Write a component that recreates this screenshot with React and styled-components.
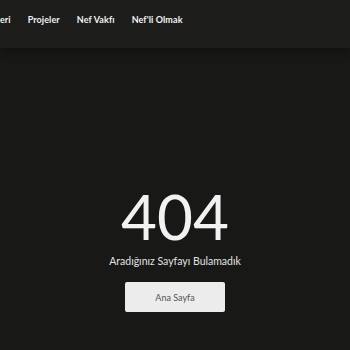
import React from "react";
import styled, { createGlobalStyle } from "styled-components";

const Global = createGlobalStyle`
  html, body { margin: 0; padding: 0; background: #181816; }
  body { font-family: "Lato", "Noto Sans", sans-serif; }
  * { box-sizing: border-box; }
`;

const Page = styled.div`
  width: 350px;
  height: 350px;
  overflow: hidden;
  background: #181816;
  display: flex;
  flex-direction: column;
`;

const Header = styled.header`
  height: 48px;
  flex: none;
  background: #1d1d1c;
  box-shadow: 0 3px 8px rgba(0, 0, 0, 0.35);
  padding-top: 14px;
  overflow: hidden;
`;

const Nav = styled.nav`
  display: flex;
  gap: 17px;
  margin-left: -32px;
  white-space: nowrap;
`;

const NavLink = styled.a`
  color: #f2f2f2;
  font-size: 9px;
  font-weight: 700;
  line-height: 12px;
  letter-spacing: 0.1px;
  text-decoration: none;
`;

const Main = styled.main`
  flex: 1;
  display: flex;
  flex-direction: column;
  align-items: center;
  padding-top: 137px;
`;

const Code = styled.h1`
  margin: 0;
  color: #f2f2f2;
  font-size: 62px;
  font-weight: 400;
  line-height: 62px;
  letter-spacing: 0px;
`;

const Message = styled.p`
  margin: 7px 0 0;
  color: #e2e2e2;
  font-size: 10.5px;
  line-height: 14px;
`;

const HomeButton = styled.a`
  margin-top: 14px;
  width: 100px;
  height: 30px;
  display: flex;
  align-items: center;
  justify-content: center;
  background: #ececec;
  border-radius: 2px;
  color: #555;
  font-size: 9px;
  text-decoration: none;
`;

export default function App() {
  return (
    <>
      <Global />
      <Page>
        <Header>
          <Nav>
            <NavLink href="#">Hizmetleri</NavLink>
            <NavLink href="#">Projeler</NavLink>
            <NavLink href="#">Nef Vakfı</NavLink>
            <NavLink href="#">Nef'li Olmak</NavLink>
          </Nav>
        </Header>
        <Main>
          <Code>404</Code>
          <Message>Aradığınız Sayfayı Bulamadık</Message>
          <HomeButton href="#">Ana Sayfa</HomeButton>
        </Main>
      </Page>
    </>
  );
}
